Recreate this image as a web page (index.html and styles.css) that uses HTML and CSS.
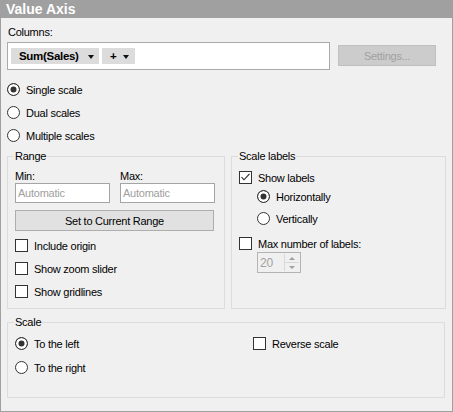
FILE: index.html
```html
<!DOCTYPE html>
<html lang="en">
<head>
<meta charset="UTF-8">
<title>Value Axis</title>
<link rel="stylesheet" href="styles.css">
</head>
<body>

<div class="panel">
  <div class="title">Value Axis</div>
  <div class="content">
    <div class="label">Columns:</div>
    <div class="colrow">
      <div class="colbox">
        <span class="chip chip-sum">Sum(Sales)<span class="arrow"></span></span>
        <span class="chip chip-add">+<span class="arrow"></span></span>
      </div>
      <button class="btn btn-settings" disabled>Settings...</button>
    </div>

    <div class="modes">
      <label class="opt"><span class="radio on"></span>Single scale</label>
      <label class="opt"><span class="radio"></span>Dual scales</label>
      <label class="opt"><span class="radio"></span>Multiple scales</label>
    </div>

    <div class="groups">
      <fieldset class="group range">
        <legend>Range</legend>
        <div class="minmax">
          <div class="field">
            <div class="field-label">Min:</div>
            <input type="text" class="input" placeholder="Automatic">
          </div>
          <div class="field">
            <div class="field-label">Max:</div>
            <input type="text" class="input" placeholder="Automatic">
          </div>
        </div>
        <button class="btn btn-range">Set to Current Range</button>
        <label class="opt first"><span class="check"></span>Include origin</label>
        <label class="opt"><span class="check"></span>Show zoom slider</label>
        <label class="opt"><span class="check"></span>Show gridlines</label>
      </fieldset>

      <fieldset class="group labels">
        <legend>Scale labels</legend>
        <label class="opt top"><span class="check"><svg width="11" height="11" viewBox="0 0 11 11"><path d="M1.5 5 L4 7.8 L9.5 1.8" fill="none" stroke="#222" stroke-width="1.1"/></svg></span>Show labels</label>
        <label class="opt sub sub-1"><span class="radio on"></span>Horizontally</label>
        <label class="opt sub sub-2"><span class="radio"></span>Vertically</label>
        <label class="opt max"><span class="check"></span>Max number of labels:</label>
        <div class="spin">
          <span class="spin-value">20</span>
          <span class="spin-btns">
            <span class="spin-up"></span>
            <span class="spin-down"></span>
          </span>
        </div>
      </fieldset>
    </div>

    <fieldset class="group scale">
      <legend>Scale</legend>
      <div class="scale-grid">
        <div>
          <label class="opt"><span class="radio on"></span>To the left</label>
          <label class="opt right"><span class="radio"></span>To the right</label>
        </div>
        <div>
          <label class="opt"><span class="check"></span>Reverse scale</label>
        </div>
      </div>
    </fieldset>
  </div>
</div>

</body>
</html>
```

FILE: styles.css
```css
* {
  box-sizing: border-box;
}
body {
  margin: 0;
  font-family: "Liberation Sans", Arial, sans-serif;
  font-size: 11px;
  letter-spacing: -0.25px;
  color: #000;
}
.panel {
  width: 453px;
  height: 412px;
  background: #f0f0f0;
  border: 1px solid #a0a0a0;
  border-top: 0;
}
.title {
  height: 18px;
  padding: 1px 0 0 5px;
  line-height: 17px;
  background: #a0a0a0;
  color: #fff;
  font-size: 14px;
  font-weight: bold;
  letter-spacing: 0;
}
.content {
  padding: 7px 6px 0 6px;
}
.label {
  line-height: 14px;
  padding-left: 1px;
}

/* columns selector */
.colrow {
  display: flex;
  align-items: flex-start;
  margin-top: 3px;
}
.colbox {
  width: 323px;
  height: 28px;
  background: #fff;
  border: 1px solid #ababab;
  display: flex;
  align-items: center;
  gap: 3px;
  padding-left: 3px;
}
.chip {
  height: 16px;
  display: flex;
  align-items: center;
  background: #dcdcdc;
  font-weight: bold;
  font-size: 11.5px;
  letter-spacing: -0.3px;
}
.chip-sum {
  width: 88px;
  padding-left: 8px;
}
.chip-sum .arrow {
  margin-left: auto;
  margin-right: 5px;
}
.chip-add {
  width: 33px;
  padding-left: 8px;
}
.chip-add .arrow {
  margin-left: 7px;
}
.arrow {
  width: 0;
  height: 0;
  border-left: 3.5px solid transparent;
  border-right: 3.5px solid transparent;
  border-top: 4px solid #111;
  margin-top: 1px;
}
.btn {
  font-family: inherit;
  font-size: 11px;
  letter-spacing: -0.25px;
  height: 21px;
  padding: 0;
  background: #e1e1e1;
  border: 1px solid #adadad;
  color: #000;
}
.btn-settings {
  width: 98px;
  margin: 3px 0 0 8px;
  background: #cccccc;
  border-color: #bfbfbf;
  color: #a0a0a0;
}

/* radio and check rows */
.opt {
  display: flex;
  align-items: center;
  gap: 6px;
  height: 13px;
  margin-top: 10px;
  white-space: nowrap;
}
.radio, .check {
  flex: none;
  width: 13px;
  height: 13px;
  border: 1px solid #333;
  background: #fff;
}
.radio {
  border-radius: 50%;
}
.radio.on {
  background: #333;
  box-shadow: inset 0 0 0 2.5px #fff;
}
.check svg {
  display: block;
}
.modes {
  padding-top: 3px;
}

/* group boxes */
.groups {
  display: flex;
  gap: 6px;
  margin-top: 7px;
}
.group {
  margin: 0;
  min-width: 0;
  border: 1px solid #dcdcdc;
  padding: 6px 7px 10px 7px;
}
.group legend {
  padding: 0 1px;
  margin-left: -1px;
  line-height: 14px;
}
.range {
  width: 218px;
}
.labels {
  width: 215px;
}
.minmax {
  display: flex;
  gap: 10px;
}
.field-label {
  line-height: 14px;
}
.input {
  display: block;
  width: 95px;
  height: 20px;
  padding: 0 2px;
  border: 1px solid #a5a5a5;
  background: #fff;
  font-family: inherit;
  font-size: 11px;
  letter-spacing: -0.25px;
  outline: none;
}
.input::placeholder {
  color: #a0a0a0;
}
.btn-range {
  display: block;
  width: 199px;
  margin-top: 7px;
}
.range .opt.first {
  margin-top: 8px;
}
.labels .opt.top {
  margin-top: 2px;
}
.labels .opt.sub {
  margin-left: 18px;
}
.labels .opt.sub-1 {
  margin-top: 6px;
}
.labels .opt.sub-2 {
  margin-top: 9px;
}
.labels .opt.max {
  margin-top: 12px;
}
.spin {
  width: 44px;
  height: 21px;
  margin: 2px 0 0 18px;
  border: 1px solid #b4b4b4;
  background: #f0f0f0;
  display: flex;
  align-items: center;
  justify-content: space-between;
  padding: 0 1px 0 2px;
}
.spin-value {
  color: #a0a0a0;
  font-size: 12px;
}
.spin-btns {
  width: 15px;
  height: 17px;
  display: flex;
  flex-direction: column;
  border-left: 1px solid #d8d8d8;
}
.spin-up, .spin-down {
  flex: 1;
  display: flex;
  align-items: center;
  justify-content: center;
}
.spin-up {
  border-bottom: 1px solid #d8d8d8;
}
.spin-up::after, .spin-down::after {
  content: "";
  border-left: 3px solid transparent;
  border-right: 3px solid transparent;
}
.spin-up::after {
  border-bottom: 3px solid #a0a0a0;
}
.spin-down::after {
  border-top: 3px solid #a0a0a0;
}

/* scale position */
.scale {
  width: 438px;
  margin-top: 6px;
  padding: 8px 7px 23px 7px;
}
.scale-grid {
  display: grid;
  grid-template-columns: 238px auto;
}
.scale-grid .opt:first-child {
  margin-top: 0;
}
.scale-grid .opt.right {
  margin-top: 11px;
}
```
